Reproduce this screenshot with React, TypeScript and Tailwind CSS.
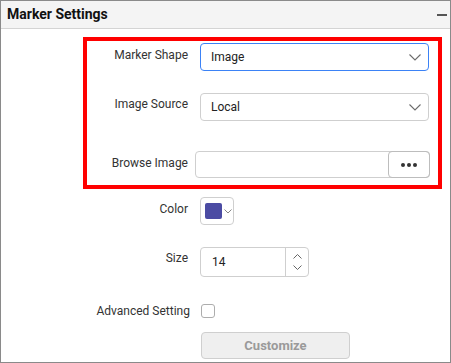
import React from 'react';

function Chevron({ className = '' }: { className?: string }) {
  return (
    <svg className={className} width="12" height="7" viewBox="0 0 12 7" fill="none">
      <path d="M0.5 0.5 L6 6 L11.5 0.5" stroke="#6b6b6b" strokeWidth="1.1" />
    </svg>
  );
}

function Label({ children, w = 'w-[101px]', lift = '' }: { children: React.ReactNode; w?: string; lift?: string }) {
  return (
    <div className={`${w} ${lift} shrink-0 text-right text-[12px] text-[#333]`}>{children}</div>
  );
}

export default function App() {
  return (
    <div
      className="w-[451px] h-[363px] border border-[#8a8a8a] bg-white overflow-hidden"
      style={{ fontFamily: 'Roboto, "Liberation Sans", sans-serif' }}
    >
      <div className="h-[28px] bg-[#f4f4f4] border-b border-[#d4d4d4] flex items-center justify-between pl-[6px] pr-[3px]">
        <span className="text-[14px] font-bold text-[#111]">Marker Settings</span>
        <span className="w-[10px] h-[2px] bg-[#555]" />
      </div>

      <div className="ml-[82px] mt-[8px] w-[359px] h-[152px] border-4 border-[#ff0000] pt-[2px]">
        <div className="flex items-center gap-[12px]">
          <Label lift="mb-[4px]">Marker Shape</Label>
          <div className="w-[229px] h-[28px] rounded-[4px] border border-[#3b82f6] flex items-center justify-between pl-[10px] pr-[7px] text-[12px] text-[#222]">
            <span>Image</span>
            <Chevron />
          </div>
        </div>
        <div className="flex items-center gap-[12px] mt-[22px]">
          <Label lift="mb-[6px]">Image Source</Label>
          <div className="w-[229px] h-[28px] rounded-[4px] border border-[#cfcfcf] flex items-center justify-between pl-[10px] pr-[7px] text-[12px] text-[#222]">
            <span>Local</span>
            <Chevron />
          </div>
        </div>
        <div className="flex items-center gap-[7px] mt-[30px]">
          <Label lift="mb-[3px]">Browse Image</Label>
          <div className="w-[235px] h-[27px] rounded-[4px] border border-[#cfcfcf] flex">
            <div className="flex-1" />
            <div className="w-[42px] -my-px -mr-px rounded-[4px] border border-[#bdbdbd] flex items-center justify-center gap-[2px]">
              <span className="w-[4px] h-[4px] rounded-full bg-[#333]" />
              <span className="w-[4px] h-[4px] rounded-full bg-[#333]" />
              <span className="w-[4px] h-[4px] rounded-full bg-[#333]" />
            </div>
          </div>
        </div>
      </div>

      <div className="pl-[86px]">
        <div className="flex items-center gap-[12px] mt-[8px]">
          <Label lift="mb-[4px]">Color</Label>
          <div className="w-[34px] h-[28px] rounded-[4px] border border-[#cfcfcf] flex items-center pl-[4px]">
            <span className="w-[17px] h-[16px] rounded-[2px] bg-[#4b4ba3]" />
            <svg className="ml-[2px]" width="8" height="5" viewBox="0 0 8 5" fill="none">
              <path d="M0.5 0.5 L4 4 L7.5 0.5" stroke="#777" strokeWidth="0.9" />
            </svg>
          </div>
        </div>
        <div className="flex items-center gap-[12px] mt-[22px]">
          <Label lift="mb-[8px]">Size</Label>
          <div className="w-[109px] h-[30px] rounded-[4px] border border-[#cfcfcf] flex">
            <div className="flex-1 flex items-center pl-[11px] text-[12px] text-[#222]">14</div>
            <div className="w-[23px] border-l border-[#cfcfcf] flex flex-col items-center justify-center gap-[6px]">
              <svg width="9" height="5" viewBox="0 0 9 5" fill="none">
                <path d="M0.5 4.5 L4.5 0.5 L8.5 4.5" stroke="#666" strokeWidth="1" />
              </svg>
              <svg width="9" height="5" viewBox="0 0 9 5" fill="none">
                <path d="M0.5 0.5 L4.5 4.5 L8.5 0.5" stroke="#666" strokeWidth="1" />
              </svg>
            </div>
          </div>
        </div>
        <div className="flex items-center gap-[11px] mt-[25px]">
          <Label w="w-[103px]">Advanced Setting</Label>
          <span className="w-[14px] h-[14px] rounded-[3px] border border-[#adadad]" />
        </div>
        <div className="ml-[114px] mt-[12px] w-[149px] h-[27px] rounded-[4px] border border-[#cfcfcf] bg-[#efefef] flex items-center justify-center text-[13px] font-bold text-[#9a9a9a]">
          Customize
        </div>
      </div>
    </div>
  );
}
